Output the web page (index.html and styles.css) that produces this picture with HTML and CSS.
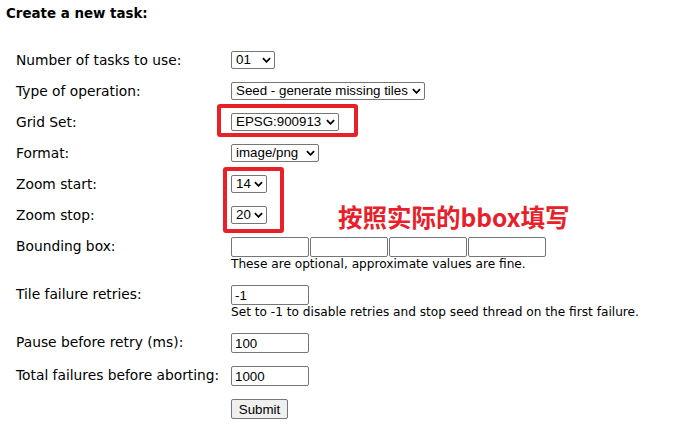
FILE: index.html
```html
<!DOCTYPE html>
<html>
<head>
<meta charset="utf-8">
<link rel="stylesheet" href="styles.css">
</head>
<body>
<div class="page">
  <h4 class="title">Create a new task:</h4>
  <form class="form">
    <label class="lbl">Number of tasks to use:</label>
    <div class="ctl"><span class="sel w44"><select><option>01</option></select><svg class="chev" viewBox="0 0 10 6"><path d="M1 1 L5 5 L9 1" fill="none" stroke="#000" stroke-width="2"/></svg></span></div>

    <label class="lbl">Type of operation:</label>
    <div class="ctl"><span class="sel w194"><select><option>Seed - generate missing tiles</option></select><svg class="chev" viewBox="0 0 10 6"><path d="M1 1 L5 5 L9 1" fill="none" stroke="#000" stroke-width="2"/></svg></span></div>

    <label class="lbl">Grid Set:</label>
    <div class="ctl"><span class="sel w108"><select><option>EPSG:900913</option></select><svg class="chev" viewBox="0 0 10 6"><path d="M1 1 L5 5 L9 1" fill="none" stroke="#000" stroke-width="2"/></svg></span></div>

    <label class="lbl">Format:</label>
    <div class="ctl"><span class="sel w88"><select><option>image/png</option></select><svg class="chev" viewBox="0 0 10 6"><path d="M1 1 L5 5 L9 1" fill="none" stroke="#000" stroke-width="2"/></svg></span></div>

    <label class="lbl">Zoom start:</label>
    <div class="ctl"><span class="sel w36"><select><option>14</option></select><svg class="chev" viewBox="0 0 10 6"><path d="M1 1 L5 5 L9 1" fill="none" stroke="#000" stroke-width="2"/></svg></span></div>

    <label class="lbl">Zoom stop:</label>
    <div class="ctl"><span class="sel w36"><select><option>20</option></select><svg class="chev" viewBox="0 0 10 6"><path d="M1 1 L5 5 L9 1" fill="none" stroke="#000" stroke-width="2"/></svg></span></div>

    <label class="lbl lbl-in">Bounding box:</label>
    <div class="ctl">
      <div class="bbox"><input class="txt"><input class="txt"><input class="txt"><input class="txt"></div>
      <div class="note">These are optional, approximate values are fine.</div>
    </div>

    <label class="lbl lbl-in">Tile failure retries:</label>
    <div class="ctl">
      <input class="txt" value="-1">
      <div class="note">Set to -1 to disable retries and stop seed thread on the first failure.</div>
    </div>

    <label class="lbl lbl-in">Pause before retry (ms):</label>
    <div class="ctl"><input class="txt" value="100"></div>

    <label class="lbl lbl-in">Total failures before aborting:</label>
    <div class="ctl"><input class="txt" value="1000"></div>

    <span></span>
    <div class="ctl"><button type="button" class="btn">Submit</button></div>
  </form>

  <div class="mark mark-grid"></div>
  <div class="mark mark-zoom"></div>
  <div class="anno">按照实际的bbox填写</div>
</div>
</body>
</html>
```

FILE: styles.css
```css
html, body {
  margin: 0;
  padding: 0;
  background: #fff;
}
.page {
  position: relative;
  width: 698px;
  height: 431px;
  padding: 6px 0 0 6px;
  box-sizing: border-box;
  font-family: "DejaVu Sans", Verdana, sans-serif;
  font-size: 13.8px;
  color: #000;
}
.title {
  margin: 0;
  font-size: 13.4px;
  font-weight: bold;
  line-height: 16px;
}
.form {
  display: grid;
  grid-template-columns: 215px auto;
  row-gap: 13px;
  margin: 29px 0 0 10px;
}
.lbl {
  line-height: 17px;
  padding-top: 1px;
}
.lbl-in {
  line-height: 19px;
  padding-top: 0;
}
.ctl {
  display: flex;
  flex-direction: column;
  align-items: flex-start;
}
.sel {
  position: relative;
  display: inline-block;
  height: 18px;
}
.sel select {
  -webkit-appearance: none;
  appearance: none;
  height: 18px;
  width: 100%;
  box-sizing: border-box;
  border: 1px solid #767676;
  border-radius: 2px;
  background: #fff;
  font-family: "Liberation Sans", Arial, sans-serif;
  font-size: 13.33px;
  line-height: 16px;
  padding: 0 12px 0 4px;
  margin: 0;
  color: #000;
}
.chev {
  position: absolute;
  right: 4px;
  top: 6px;
  width: 9px;
  height: 6px;
  pointer-events: none;
}
.w44 { width: 44px; }
.w194 { width: 194px; }
.w108 { width: 108px; }
.w88 { width: 88px; }
.w36 { width: 36px; }
.bbox {
  display: flex;
  gap: 1px;
}
.txt {
  width: 78px;
  height: 20px;
  box-sizing: border-box;
  border: 1px solid #767676;
  border-radius: 2px;
  padding: 1px 3px;
  margin: 0;
  font-family: "Liberation Sans", Arial, sans-serif;
  font-size: 13.33px;
  color: #000;
}
.note {
  font-size: 12.15px;
  line-height: 15px;
}
.btn {
  height: 20px;
  width: 57px;
  box-sizing: border-box;
  border: 1px solid #767676;
  border-radius: 2px;
  background: #efefef;
  font-family: "Liberation Sans", Arial, sans-serif;
  font-size: 13.33px;
  padding: 0;
  margin: 0;
  color: #000;
}
.mark {
  position: absolute;
  border: 4px solid #e8202a;
  border-radius: 3px;
  box-sizing: border-box;
}
.mark-grid {
  left: 217px;
  top: 104px;
  width: 141px;
  height: 33px;
}
.mark-zoom {
  left: 223px;
  top: 167px;
  width: 61px;
  height: 66px;
}
.anno {
  position: absolute;
  left: 338px;
  top: 200px;
  font-family: "Noto Sans CJK SC", "DejaVu Sans", sans-serif;
  font-weight: bold;
  font-size: 24.5px;
  line-height: 34px;
  color: #e8202a;
}
```
